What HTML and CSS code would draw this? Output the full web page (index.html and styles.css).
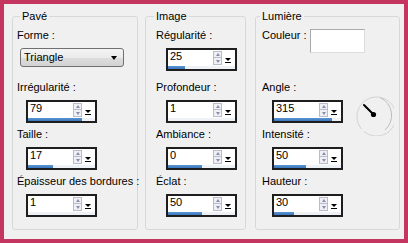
FILE: index.html
```html
<!DOCTYPE html>
<html lang="fr">
<head>
<meta charset="utf-8">
<link rel="stylesheet" href="styles.css">
</head>
<body>
<div class="window">
  <fieldset class="group pave">
    <legend>Pavé</legend>
    <div class="rows">
      <div class="row">
        <div class="label">Forme :</div>
        <div class="combo"><span>Triangle</span><span class="caret"></span></div>
      </div>
      <div class="row">
        <div class="label">Irrégularité :</div>
        <div class="spin"><span class="val">79</span><span class="arrows"><i class="up"></i><i class="down"></i></span><span class="drop"></span><span class="track"><span class="fill" style="width:80%"></span></span></div>
      </div>
      <div class="row">
        <div class="label">Taille :</div>
        <div class="spin"><span class="val">17</span><span class="arrows"><i class="up"></i><i class="down"></i></span><span class="drop"></span><span class="track"><span class="fill" style="width:37%"></span></span></div>
      </div>
      <div class="row">
        <div class="label">Épaisseur des bordures :</div>
        <div class="spin"><span class="val">1</span><span class="arrows"><i class="up"></i><i class="down"></i></span><span class="drop"></span><span class="track"><span class="fill" style="width:0%"></span></span></div>
      </div>
    </div>
  </fieldset>

  <fieldset class="group image">
    <legend>Image</legend>
    <div class="rows">
      <div class="row">
        <div class="label">Régularité :</div>
        <div class="spin"><span class="val">25</span><span class="arrows"><i class="up"></i><i class="down"></i></span><span class="drop"></span><span class="track"><span class="fill" style="width:25%"></span></span></div>
      </div>
      <div class="row">
        <div class="label">Profondeur :</div>
        <div class="spin"><span class="val">1</span><span class="arrows"><i class="up"></i><i class="down"></i></span><span class="drop"></span><span class="track"><span class="fill" style="width:0%"></span></span></div>
      </div>
      <div class="row">
        <div class="label">Ambiance :</div>
        <div class="spin"><span class="val">0</span><span class="arrows"><i class="up"></i><i class="down"></i></span><span class="drop"></span><span class="track"><span class="fill" style="width:50%"></span></span></div>
      </div>
      <div class="row">
        <div class="label">Éclat :</div>
        <div class="spin"><span class="val">50</span><span class="arrows"><i class="up"></i><i class="down"></i></span><span class="drop"></span><span class="track"><span class="fill" style="width:50%"></span></span></div>
      </div>
    </div>
  </fieldset>

  <fieldset class="group lumiere">
    <legend>Lumière</legend>
    <div class="rows">
      <div class="row inline">
        <div class="label">Couleur :</div>
        <div class="swatch"></div>
      </div>
      <div class="row">
        <div class="label">Angle :</div>
        <div class="ctrl-line">
          <div class="spin"><span class="val">315</span><span class="arrows"><i class="up"></i><i class="down"></i></span><span class="drop"></span><span class="track"><span class="fill" style="width:86%"></span></span></div>
          <svg class="dial" width="42" height="42" viewBox="0 0 42 42">
            <path d="M9.5 35 A19.5 19.5 0 1 1 12 37.5" fill="none" stroke="#d2d2d2" stroke-width="1"/>
            <path d="M28 3.5 A19.5 19.5 0 0 1 33 36" fill="none" stroke="#bdbdbd" stroke-width="1"/>
            <line x1="12" y1="11" x2="21.5" y2="20.5" stroke="#000" stroke-width="2" stroke-linecap="round"/>
            <circle cx="21.5" cy="20.5" r="2.6" fill="#000"/>
          </svg>
        </div>
      </div>
      <div class="row">
        <div class="label">Intensité :</div>
        <div class="spin"><span class="val">50</span><span class="arrows"><i class="up"></i><i class="down"></i></span><span class="drop"></span><span class="track"><span class="fill" style="width:48%"></span></span></div>
      </div>
      <div class="row">
        <div class="label">Hauteur :</div>
        <div class="spin"><span class="val">30</span><span class="arrows"><i class="up"></i><i class="down"></i></span><span class="drop"></span><span class="track"><span class="fill" style="width:30%"></span></span></div>
      </div>
    </div>
  </fieldset>
</div>
</body>
</html>
```

FILE: styles.css
```css
html, body {
  margin: 0;
  padding: 0;
}

.window {
  width: 408px;
  height: 243px;
  box-sizing: border-box;
  border: 4px solid #c4355f;
  background: #f0f0f0;
  padding: 6px 4px 0 8px;
  display: flex;
  align-items: flex-start;
  font: 11px "Liberation Sans", Arial, sans-serif;
  color: #000;
}

.group {
  margin: 0;
  padding: 6px 0 0 0;
  height: 220px;
  box-sizing: border-box;
  border: 1px solid #d5d9dc;
  border-radius: 3px;
  min-width: 0;
}

.group legend {
  padding: 0 2px;
  line-height: 13px;
}

.pave { width: 126px; }
.pave legend { margin-left: 7px; }
.pave .rows { padding-left: 4px; }

.image { width: 101px; margin-left: 7px; }
.image legend { margin-left: 8px; }
.image .rows { padding-left: 10px; }

.lumiere { width: 145px; margin-left: 9px; }
.lumiere legend { margin-left: 4px; }
.lumiere .rows { padding-left: 6px; }

.rows {
  display: grid;
  grid-template-rows: 52px 47px 47px auto;
}

.row {
  display: flex;
  flex-direction: column;
  align-items: flex-start;
}

.row.inline {
  flex-direction: row;
}

.label {
  line-height: 13px;
  white-space: nowrap;
  margin-bottom: 6px;
}

/* combo box */
.combo {
  margin-left: 3px;
  width: 104px;
  height: 19px;
  box-sizing: border-box;
  border: 1px solid #707070;
  border-radius: 3px;
  background: linear-gradient(#f4f4f4, #ebebeb 50%, #dedede 51%, #d2d2d2);
  display: flex;
  align-items: center;
  justify-content: space-between;
  padding: 0 6px 0 3px;
  line-height: 13px;
}

.caret {
  width: 0;
  height: 0;
  border-left: 3.5px solid transparent;
  border-right: 3.5px solid transparent;
  border-top: 4px solid #000;
}

/* spin box with slider */
.spin {
  width: 71px;
  height: 23px;
  box-sizing: border-box;
  border: 2px solid #1e1e1e;
  background: #fff;
  display: grid;
  grid-template-columns: 45px 9px 13px;
  grid-template-rows: 16px 3px;
}

.pave .spin { margin-left: 9px; }
.image .spin, .lumiere .spin { margin-left: 10px; }
.lumiere .ctrl-line .spin { margin-left: 0; }

.val {
  line-height: 11px;
  padding-left: 2px;
  padding-top: 1px;
}

.arrows {
  display: flex;
  flex-direction: column;
  padding-top: 1px;
}

.arrows i {
  position: relative;
  display: block;
  width: 9px;
  height: 7px;
  box-sizing: border-box;
  border: 1px solid #b9bccb;
  background: #eef0f6;
}

.arrows i.down { border-top: 0; height: 7px; }

.arrows i::after {
  content: "";
  position: absolute;
  left: 1.5px;
  top: 1px;
  width: 0;
  height: 0;
  border-left: 2.5px solid transparent;
  border-right: 2.5px solid transparent;
}

.arrows i.up::after { border-bottom: 3px solid #8a8fa8; }
.arrows i.down::after { border-top: 3px solid #8a8fa8; top: 1.5px; }

.drop {
  display: flex;
  flex-direction: column;
  align-items: center;
  justify-content: flex-start;
  padding-top: 8px;
  padding-right: 2px;
}

.drop::before {
  content: "";
  width: 0;
  height: 0;
  border-left: 3px solid transparent;
  border-right: 3px solid transparent;
  border-top: 3px solid #000;
}

.drop::after {
  content: "";
  width: 6px;
  height: 1px;
  margin-top: 1px;
  background: #000;
}

.track {
  grid-column: 1 / 4;
  background: #eef2f6;
  display: flex;
}

.fill {
  display: block;
  height: 3px;
  background: linear-gradient(#5a95d2, #3a77bd);
}

.ctrl-line {
  display: flex;
  align-items: flex-start;
  margin-left: 10px;
}

.dial {
  display: block;
  margin-left: 9px;
  margin-top: -6px;
}

.swatch {
  margin-left: 3px;
  width: 55px;
  height: 24px;
  box-sizing: border-box;
  background: #fff;
  border: 1px solid;
  border-color: #a9a9a9 #dcdcdc #dcdcdc #a9a9a9;
}
```
